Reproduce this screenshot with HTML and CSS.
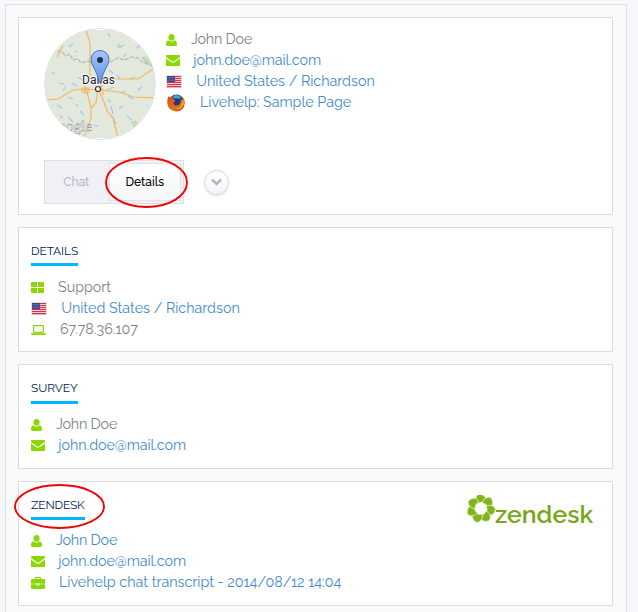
FILE: index.html
```
<!DOCTYPE html>
<html lang="en">
<head>
<meta charset="utf-8">
<title>Visitor details</title>
<link rel="stylesheet" href="styles.css">
</head>
<body>
<svg class="defs" aria-hidden="true">
  <symbol id="user" viewBox="0 0 11 12"><path d="M5.500 0c1.900 0 3.100 1.400 3.100 3.200S7.400 6.800 5.500 6.800 2.400 5 2.400 3.200 3.600 0 5.500 0zM2.500 6.200C3.300 7.100 4.300 7.600 5.500 7.600s2.200-.5 3-1.400C10.200 6.500 11 8 11 10.200 11 11.300 10.300 12 9.300 12H1.700C.7 12 0 11.300 0 10.200 0 8 .8 6.500 2.500 6.200z"/></symbol>
  <symbol id="mail" viewBox="0 0 14 11"><path d="M1 0h12c.6 0 1 .4 1 1 0 .9-.7 1.600-1.400 2.100L8.400 6C7.900 6.400 7.400 6.600 7 6.600S6.100 6.400 5.600 6L1.400 3.100C.7 2.600 0 1.900 0 1 0 .4.4 0 1 0zM0 3.300c.3.400.7.600 1.100.9l3.900 2.800c.7.500 1.300.8 2 .8s1.300-.3 2-.8l3.900-2.800c.4-.3.800-.5 1.100-.9V10c0 .6-.4 1-1 1H1c-.6 0-1-.4-1-1z"/></symbol>
  <symbol id="grid" viewBox="0 0 13 11"><path d="M1 0h5v5H0V1q0-1 1-1zM7 0h5q1 0 1 1v4H7zM0 6h6v5H1q-1 0-1-1zM7 6h6v4q0 1-1 1H7z"/></symbol>
  <symbol id="laptop" viewBox="0 0 15 10"><path fill-rule="evenodd" d="M3 0h9q1 0 1 1v6q0 1-1 1H3Q2 8 2 7V1q0-1 1-1zM3.200 1.200v5.600h8.600V1.200zM0 8.200h15v.8q-.4 1-1.500 1h-12Q.4 10 0 9z"/></symbol>
  <symbol id="case" viewBox="0 0 14 12"><path fill-rule="evenodd" d="M4 2V.8Q4 0 4.800 0h4.400Q10 0 10 .8V2h3q1 0 1 1v3.700H8.500V6h-3v.7H0V3q0-1 1-1zM5 1v1h4V1zM0 7.300h5.500V8.500h3V7.300H14V11q0 1-1 1H1q-1 0-1-1zM6.300 6.500h1.400v1.200H6.300z"/></symbol>
  <symbol id="flag" viewBox="0 0 16 13">
    <path fill="#e2e2e2" d="M0 0h16v13H0z"/><path fill="#fff" d="M1 1h14v11H1z"/>
    <path fill="#d9304a" d="M1 1h14v1.200H1zM1 3h14v1.200H1zM1 5h14v1.200H1zM1 7h14v1.300H1zM1 9h14v1.300H1zM1 10.900h14v1.300H1z"/>
    <path fill="#36458c" d="M1 1h8v6H1z"/><path stroke="#8d9bcb" stroke-width=".7" stroke-dasharray="1 1" d="M1.500 2.500h7M2.500 4h6M1.500 5.500h7"/>
  </symbol>
  <linearGradient id="fire" x1="0" y1="0" x2="1" y2="1"><stop offset="0" stop-color="#d9481c"/><stop offset=".6" stop-color="#e8701a"/><stop offset="1" stop-color="#b93510"/></linearGradient>
  <symbol id="fox" viewBox="0 0 18 18">
    <circle cx="9.500" cy="8" r="7.500" fill="#173f7c"/><path fill="#4b9bd5" d="M6 2.500Q10-.5 14 3L12 5 9 4 7 5z"/>
    <path fill="url(#fire)" d="M1 3Q2 2 3 3Q5 2 6.500 3L5.800 5.200 8.700 6.500 6.500 8.400Q6.500 12 10 11.500Q14.500 10.500 13.700 4.500Q15 5.600 15.200 7Q16.200 4.500 14.800 2.300Q18 5 17.800 9.300Q17 17 9.400 17.500Q1.500 17 .3 9.500Q0 6 1 3z"/>
    <path fill="#f9b62e" d="M15.500 5Q18 9 15.300 12.800Q12.300 16 8 14.700Q13 14.500 14.600 10.600Q15.800 8.500 15.500 5z"/>
  </symbol>
</svg>

<main class="panel">
  <section class="card visitor">
    <div class="summary">
      <svg class="map" viewBox="0 0 112 112" role="img" aria-label="Map of Dallas">
        <defs>
          <clipPath id="round"><circle cx="56" cy="56" r="55"/></clipPath>
          <linearGradient id="pin" x1="0" y1="0" x2="0" y2="1"><stop offset="0" stop-color="#a5c5fb"/><stop offset="1" stop-color="#6795ea"/></linearGradient>
        </defs>
        <circle cx="56" cy="56" r="55.500" fill="#fff" stroke="#dfe3e9"/>
        <g clip-path="url(#round)" fill="none">
          <path fill="#e2e8db" d="M0 2h112v108H0z"/>
          <path fill="#c8dcb0" d="M100 28l8 3 2 8-8-4-3-3zM87 94l5-2 2 4-4 4zM72 18l3-3 2 3-3 2z"/>
          <path stroke="#a5c4f5" stroke-width="1.200" d="M25 19l4-3M31 23l3 1M64 5l2 4M75 20l5-3M82 25l-2 4M96 17l-3 3M98 29l5 6M15 55l5 1M21 59l-2 4M28 55l5 3M34 49l5 3M24 69l5 2M13 77l5 3M16 88l3 2M24 89l5 5M32 76l2 3M36 83l4 4M65 42l4 3M73 47l3 4M77 65l4-2M67 78l2 8M69 89l3 7M75 81l4-3M84 68l5 3M94 62l4-3M83 88l5 4M86 51l5-2M33 94l4 5M49 29l3 4M8 44l3 2M50 97l4 1M64 71l3 3M63 62l7-3"/>
          <path stroke="#b3b3b0" stroke-width="1.200" stroke-dasharray="4 1.500" d="M8 24L17 23l5 5 4-2 3 6 5-1 3 4 7-2 4 3M66 34l8-4 7 2 6-3 7 1 4 4 8 3 4 2"/>
          <path stroke="#f5b660" stroke-width="1.200" d="M42 2L46 15V56M13 29L19 17M3 72L14 71L29 62L41 61L55 62L76 64L89 69L112 70M54 60Q62 55 70 51H94L112 39M42 60L47 80V90L42 105L37 112M47 80L52 75L54 60M54 60L60 74L63 83L69 90L74 110M38 60h7v4H38zM41 58v8M55 58q5 3 4 9"/>
          <text class="credit" x="4" y="103">Google</text>
        </g>
        <text class="city" x="54.500" y="55.500" text-anchor="middle">Dallas</text>
        <path fill="url(#pin)" stroke="#4770b5" d="M54.500 54Q54 46 49.500 39Q47 35 47 31.500A9 9 0 0 1 65 31.500Q65 35 62.500 39Q58 46 57.500 54z"/>
        <circle cx="56" cy="32" r="3" fill="#20304f"/>
        <circle cx="54" cy="61" r="2.500" fill="#fff" stroke="#333" stroke-width="1.200"/>
      </svg>
      <ul class="rows">
        <li><svg class="icon user"><use href="#user"/></svg><span class="name">John Doe</span></li>
        <li><svg class="icon mail"><use href="#mail"/></svg><a class="address">john.doe@mail.com</a></li>
        <li><svg class="icon flag"><use href="#flag"/></svg><a>United States / Richardson</a></li>
        <li><svg class="icon fox"><use href="#fox"/></svg><a>Livehelp: Sample Page</a></li>
      </ul>
    </div>
    <div class="controls">
      <div class="tabs">
        <span class="tab">Chat</span><span class="tab active">Details</span>
        <svg class="mark" viewBox="0 0 84 52"><ellipse cx="42.500" cy="26.500" rx="40.500" ry="24.500"/></svg>
      </div>
      <button class="more" aria-label="More"><svg viewBox="0 0 11 8"><path d="M1 1.500l4.500 4.500L10 1.500"/></svg></button>
    </div>
  </section>

  <section class="card">
    <h2>DETAILS</h2>
    <ul class="rows">
      <li><svg class="icon grid"><use href="#grid"/></svg>Support</li>
      <li><svg class="icon flag"><use href="#flag"/></svg><a>United States / Richardson</a></li>
      <li><svg class="icon laptop"><use href="#laptop"/></svg>67.78.36.107</li>
    </ul>
  </section>

  <section class="card survey">
    <h2>SURVEY</h2>
    <ul class="rows">
      <li><svg class="icon user"><use href="#user"/></svg><span class="name">John Doe</span></li>
      <li><svg class="icon mail"><use href="#mail"/></svg><a class="address">john.doe@mail.com</a></li>
    </ul>
  </section>

  <section class="card zendesk">
    <div>
      <h2>ZENDESK<svg class="mark wide" viewBox="0 0 92 46"><ellipse cx="46.500" cy="23.500" rx="44.500" ry="21.500"/></svg></h2>
      <ul class="rows">
        <li><svg class="icon user"><use href="#user"/></svg><a class="name">John Doe</a></li>
        <li><svg class="icon mail"><use href="#mail"/></svg><a class="address">john.doe@mail.com</a></li>
        <li><svg class="icon case"><use href="#case"/></svg><a>Livehelp chat transcript - 2014/08/12 14:04</a></li>
      </ul>
    </div>
    <svg class="logo" viewBox="0 0 127 36" role="img" aria-label="zendesk">
      <defs>
        <path id="petal" d="M-6-5.500Q-9-10-5.500-14Q-1-15 2.200-12Q3.500-9.500 2.500-6.500Q-2-7.500-4.500-3.500z"/>
      </defs>
      <g fill="#82b41c" stroke="#fff" stroke-width=".6" transform="translate(14 13.500) scale(.98)">
        <use href="#petal" transform="rotate(12)"/>
        <use href="#petal" transform="rotate(63)"/>
        <use href="#petal" transform="rotate(115)"/>
        <use href="#petal" transform="rotate(166)"/>
        <use href="#petal" transform="rotate(218)"/>
        <use href="#petal" transform="rotate(269)"/>
        <use href="#petal" transform="rotate(320)"/>
      </g>
      <text class="brand" x="28" y="27.500" textLength="98" lengthAdjust="spacingAndGlyphs">zendesk</text>
    </svg>
  </section>
</main>
</body>
</html>
```
FILE: styles.css
```
* { box-sizing: border-box; }

body {
  margin: 0;
  height: 612px;
  padding: 4px 11px 0 5px;
  overflow: hidden;
  background: #f6f7fa;
  color: #7c8287;
  font: 400 14.3px/21px Raleway, Lato, sans-serif;
}

.defs { position: absolute; width: 0; height: 0; }

.panel {
  display: flex;
  flex-direction: column;
  gap: 12px;
  height: 620px;
  padding: 12px;
  border: 1px solid #dbdee2;
  background: #fafafa;
}

.card {
  flex: none;
  width: 595px;
  height: 125px;
  padding: 14px 12px 0;
  border: 1px solid #dbdddf;
  background: #fff;
}

.visitor { height: 198px; padding: 10px 25px 0; }
.survey { height: 105px; }
.zendesk { display: flex; justify-content: space-between; padding-right: 18px; }

h2 {
  position: relative;
  width: max-content;
  height: 24px;
  margin: 0 0 11px;
  border-bottom: 3px solid #00b7ff;
  color: #002255;
  font: 400 12px/18px Raleway, Lato, sans-serif;
  letter-spacing: -0.1px;
}
.survey h2 { height: 25px; margin-bottom: 10px; }
.zendesk h2 { margin-bottom: 10px; letter-spacing: -0.2px; }

.rows { margin: 0; padding: 0; list-style: none; }
.rows li { display: flex; align-items: center; height: 21px; white-space: pre; }
.rows a { color: #428bca; }
.rows .name { letter-spacing: -0.2px; }
.rows .address { letter-spacing: -0.05px; }

.summary { display: flex; gap: 10px; height: 132px; }
.summary .rows { padding-top: 1px; }
.map { width: 112px; height: 112px; }
.credit { fill: #fff; stroke: #999; stroke-width: .5; font: 15px "Liberation Serif", serif; }
.city { fill: #222; stroke: #fff; stroke-width: 2px; paint-order: stroke; font: 12px Roboto, sans-serif; }

.icon { flex: none; fill: #8bd800; }
.icon.user { width: 11px; height: 12px; margin-right: 14px; }
.icon.mail { width: 14px; height: 11px; margin-right: 13.3px; }
.icon.grid { width: 13px; height: 11px; margin-right: 14px; }
.icon.flag { width: 16px; height: 13px; margin-right: 14.2px; }
.icon.laptop { width: 15px; height: 10px; margin-right: 14px; }
.icon.case { width: 14px; height: 12px; margin-right: 14px; }
.icon.fox { width: 20px; height: 18px; margin-right: 14px; }

.controls { display: flex; align-items: center; gap: 20px; }
.tabs {
  position: relative;
  display: flex;
  width: 140px;
  height: 44px;
  padding: 2px;
  border: 1px solid #dddfe3;
  background: #f0f1f4;
  font-size: 12px;
  font-weight: 500;
}
.tab { width: 62px; padding-right: 3px; line-height: 38px; text-align: center; color: #b4b5cc; }
.tab.active {
  width: 73px;
  height: 38px;
  padding: 0;
  border: 1px solid #e1e3e6;
  background: linear-gradient(#fff, #f5f6f7);
  color: #000;
  line-height: 36px;
  font-weight: 500;
}
.more {
  display: flex;
  align-items: center;
  justify-content: center;
  width: 25px;
  height: 25px;
  padding: 0;
  border: 1px solid #d8dadd;
  border-radius: 50%;
  background: linear-gradient(#fff, #f3f4f5);
  box-shadow: 0 1px 2px #0002;
}
.more svg { width: 11px; height: 8px; fill: none; stroke: #b1b3cb; stroke-width: 2.5; }

.mark { position: absolute; left: 59px; top: -5px; width: 84px; height: 52px; fill: none; stroke: #f00505; stroke-width: 1.9; pointer-events: none; }
.mark.wide { left: -18px; top: -13px; width: 92px; height: 46px; }

.logo { width: 127px; height: 36px; margin-top: -1px; }
.brand { fill: #78a61b; font: 600 25px Raleway, Lato, sans-serif; }
```
